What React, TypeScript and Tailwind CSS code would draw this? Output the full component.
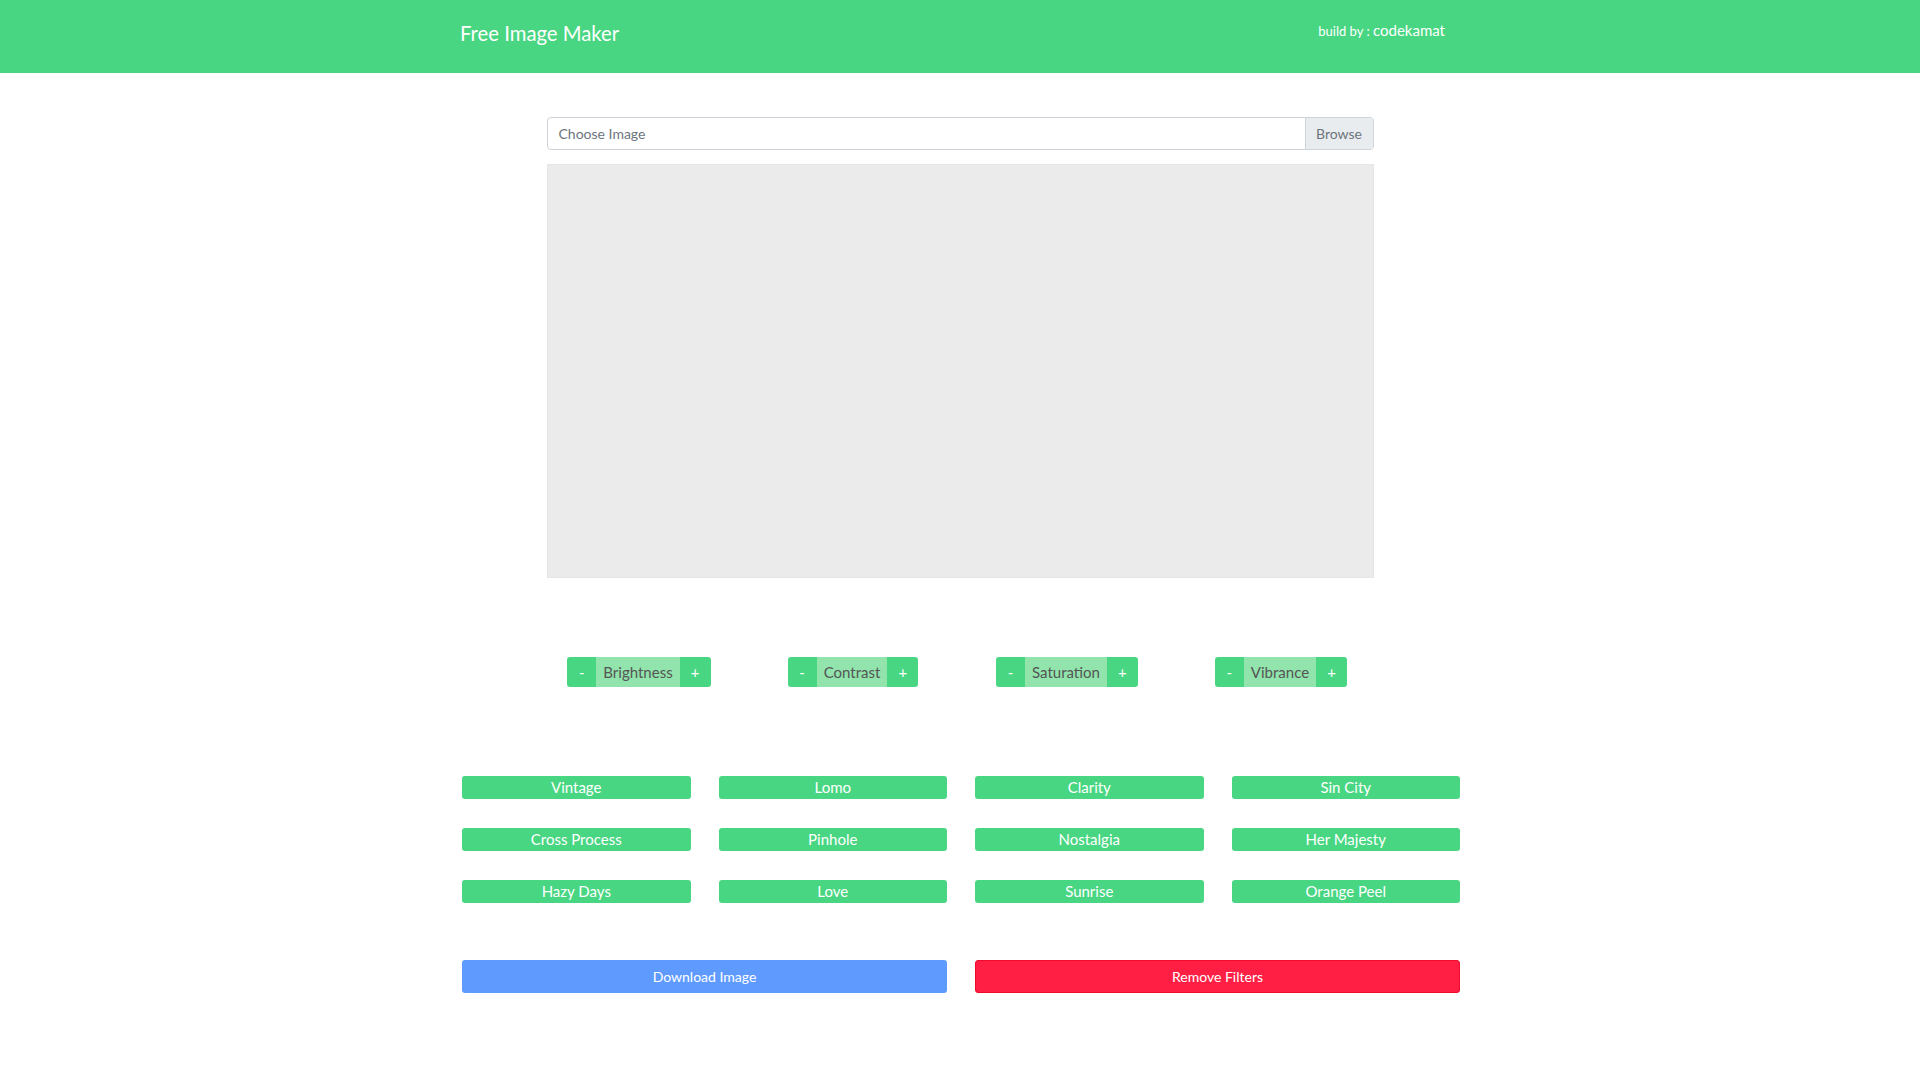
const filters = [
  "Vintage",
  "Lomo",
  "Clarity",
  "Sin City",
  "Cross Process",
  "Pinhole",
  "Nostalgia",
  "Her Majesty",
  "Hazy Days",
  "Love",
  "Sunrise",
  "Orange Peel",
];

const adjustments = ["Brightness", "Contrast", "Saturation", "Vibrance"];

export default function App() {
  return (
    <div className="min-h-screen bg-white font-['Lato',sans-serif]">
      {/* navbar */}
      <nav className="h-[73px] bg-[#48d682]">
        <div className="mx-auto flex w-[1000px] items-start justify-between">
          <span className="mt-[20px] text-[20.3px] leading-[26px] text-white">
            Free Image Maker
          </span>
          <span className="mt-[18px] mr-[15px] text-white">
            <span className="text-[13px]">build by : </span>
            <span className="text-[15px]">codekamat</span>
          </span>
        </div>
      </nav>

      <div className="mx-auto w-[827px] pt-[44px]">
        <div className="flex h-[33px] rounded-[4px] border border-[#ced4da] text-[14px]">
          <div className="flex flex-1 items-center px-[11px] text-[#6c757d]">
            Choose Image
          </div>
          <div className="flex w-[68px] items-center justify-center rounded-r-[3px] border-l border-[#ced4da] bg-[#e9ecef] text-[#6c757d]">
            Browse
          </div>
        </div>

        <div className="mt-[14px] h-[414px] border border-[#e6e6e6] bg-[#ebebeb]" />
      </div>

      {/* adjustments */}
      <div className="mx-auto mt-[79px] grid w-[856px] grid-cols-4 justify-items-center">
        {adjustments.map((name) => (
          <div key={name} className="flex h-[30px] overflow-hidden rounded-[3px] text-[15px]">
            <button className="w-[29px] bg-[#48d682] text-white">-</button>
            <span className="flex items-center bg-[#90e4ac] px-[7px] text-[#555]">{name}</span>
            <button className="w-[31px] bg-[#48d682] text-white">+</button>
          </div>
        ))}
      </div>

      {/* filters */}
      <div className="mx-auto w-[1000px] pl-[2px]">
        <div className="mt-[89px] grid grid-cols-4 gap-x-[28px] gap-y-[29px]">
          {filters.map((f) => (
            <button
              key={f}
              className="h-[23px] rounded-[3px] bg-[#48d682] text-[15px] leading-[23px] text-white"
            >
              {f}
            </button>
          ))}
        </div>

        <div className="mt-[57px] grid grid-cols-2 gap-x-[28px]">
          <button className="h-[33px] rounded-[3px] bg-[#5f9bff] text-[14px] text-white">
            Download Image
          </button>
          <button className="h-[33px] rounded-[3px] border border-[#f20a2a] bg-[#ff1f44] text-[14px] text-white">
            Remove Filters
          </button>
        </div>
      </div>
    </div>
  );
}
